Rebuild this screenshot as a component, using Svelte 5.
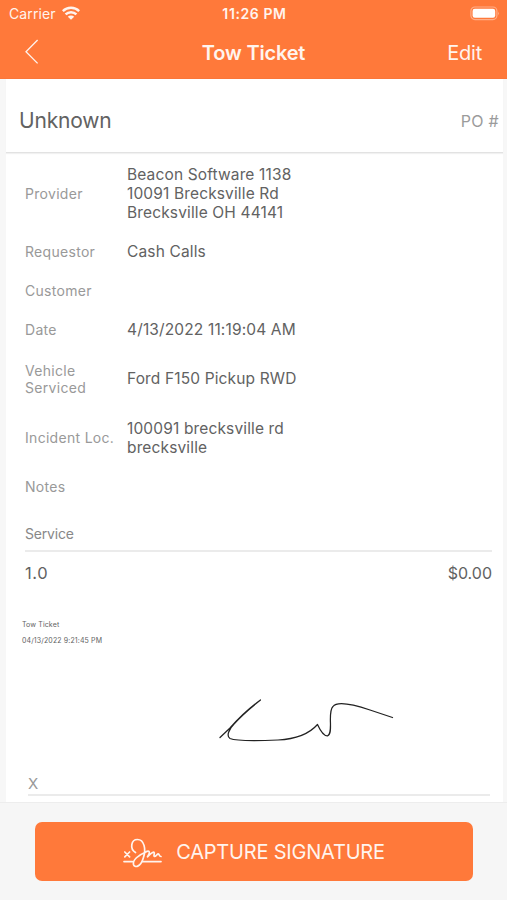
<script>
  const rows = [
    { label: 'Provider', lines: ['Beacon Software 1138', '10091 Brecksville Rd', 'Brecksville OH 44141'] },
    { label: 'Requestor', lines: ['Cash Calls'] },
    { label: 'Customer', lines: [] },
    { label: 'Date', lines: ['4/13/2022 11:19:04 AM'] },
    { label: 'Vehicle Serviced', lines: ['Ford F150 Pickup RWD'], tall: true },
    { label: 'Incident Loc.', lines: ['100091 brecksville rd', 'brecksville'], tall: true },
    { label: 'Notes', lines: [] }
  ];

  const services = [{ qty: '1.0', price: '$0.00' }];
</script>

<div class="screen">
  <header>
    <div class="status-bar">
      <div class="carrier">
        <span>Carrier</span>
        <svg class="wifi" viewBox="0 0 18 14">
          <g fill="none" stroke="currentColor" stroke-width="2.5">
            <path d="M0.8 5.1 A11.6 11.6 0 0 1 17.2 5.1" />
            <path d="M3.6 8.4 A7.6 7.6 0 0 1 14.4 8.4" />
          </g>
          <path d="M5.8 10.7 A4.6 4.6 0 0 1 12.2 10.7 L9 13.8 Z" fill="currentColor" />
        </svg>
      </div>
      <div class="clock">11:26 PM</div>
      <svg class="battery" viewBox="0 0 30 15">
        <rect x="0.9" y="1" width="26" height="12.6" rx="4" fill="none" stroke="#fff" stroke-opacity="0.4" stroke-width="1.2" />
        <rect x="2.6" y="2.8" width="22.6" height="9" rx="2.2" fill="#fff" />
        <path d="M28.2 5.4 Q29.7 7.3 28.2 9.2 Z" fill="#fff" fill-opacity="0.5" />
      </svg>
    </div>
    <nav>
      <button class="back" aria-label="Back">
        <svg viewBox="0 0 14 26">
          <path d="M12.6 1 L1 12.7 L12.6 24.4" fill="none" stroke="currentColor" stroke-width="1.3" />
        </svg>
      </button>
      <h1>Tow Ticket</h1>
      <button class="edit">Edit</button>
    </nav>
  </header>

  <main>
    <div class="summary">
      <span class="name">Unknown</span>
      <span class="po">PO #</span>
    </div>

    <div class="details">
      {#each rows as row}
        <div class="row" class:tall={row.tall}>
          <div class="label">{row.label}</div>
          <div class="value">
            {#each row.lines as line}
              <div>{line}</div>
            {/each}
          </div>
        </div>
      {/each}
    </div>

    <div class="services">
      <div class="services-title">Service</div>
      {#each services as service}
        <div class="service">
          <span class="qty">{service.qty}</span>
          <span>{service.price}</span>
        </div>
      {/each}
    </div>

    <div class="signature">
      <div class="stamp">
        <div>Tow Ticket</div>
        <div>04/13/2022 9:21:45 PM</div>
      </div>
      <svg class="ink" viewBox="0 0 180 50">
        <path
          d="M2 42.5 L12 33 Q26 17 42.5 5 Q26 18 16 29 C11 34 8 41 12 43.5 C18 46 44 45.7 60 45 C80 44 92 38 99.5 29.5 C102 35 106 41 109.5 40.8 C116 39 109 17 115 11.5 C119 6 137 10 152 15 L174.5 22.5"
          fill="none" stroke="#222" stroke-width="1.25" stroke-linecap="round" stroke-linejoin="round"
        />
      </svg>
      <div class="sign-line">X</div>
    </div>
  </main>

  <footer>
    <button class="capture">
      <svg class="pen" viewBox="0 0 40 30">
        <g fill="none" stroke="currentColor" stroke-width="1.7" stroke-linecap="round" stroke-linejoin="round">
          <path d="M1.8 14 L6.6 18.8 M6.6 14 L1.8 18.8" />
          <path d="M1 23.6 H9.5 M19 23.6 H38" />
          <path d="M12.5 14.5 C6.5 11 8 1.5 14.5 1.5 C21 1.5 23.5 11 20.3 20 C17.5 29.5 11.5 30 10.5 26.5 C9.5 22 15.5 17 22 14.5 C26 12 28 13 24.5 18.8 C27 16.5 29.5 13.8 31 14.2 C32.3 15 30 18 31.5 18.3 C33 18.5 34.3 15.5 35.5 16 C36.5 16.5 36 18.5 38 18.5" />
        </g>
      </svg>
      <span>CAPTURE SIGNATURE</span>
    </button>
  </footer>
</div>

<style>
  :global(body) {
    margin: 0;
    background: #f6f6f6;
  }

  .screen {
    height: 900px;
    display: flex;
    flex-direction: column;
    background: #f7f7f7;
    font-family: Inter, "Liberation Sans", sans-serif;
    color: #626262;
  }

  button {
    border: none;
    background: none;
    padding: 0;
    font: inherit;
    color: inherit;
  }

  header {
    flex: none;
    height: 79px;
    box-sizing: border-box;
    background: #ff793a;
    border-bottom: 1px solid #fa7639;
    color: #fff4ee;
  }

  .status-bar {
    height: 27px;
    padding: 0 7px 0 9px;
    display: grid;
    grid-template-columns: 1fr auto 1fr;
    align-items: center;
    font-size: 14px;
  }

  .carrier {
    display: flex;
    align-items: center;
    gap: 6px;
    letter-spacing: 0.1px;
  }

  .wifi {
    width: 18px;
    height: 14px;
    margin-bottom: 2px;
  }

  .clock {
    font-size: 14px;
    font-weight: 600;
    letter-spacing: 0.6px;
  }

  .battery {
    width: 30px;
    height: 15px;
    justify-self: end;
  }

  nav {
    height: 51px;
    padding: 0 25px;
    display: grid;
    grid-template-columns: 1fr auto 1fr;
    align-items: center;
  }

  .back {
    height: 26px;
    margin-bottom: 2px;
    justify-self: start;
  }

  .back svg {
    display: block;
    width: 14px;
    height: 26px;
  }

  h1 {
    margin: 0;
    font-size: 20px;
    font-weight: 600;
    letter-spacing: -0.2px;
  }

  .edit {
    justify-self: end;
    font-size: 20px;
    letter-spacing: -0.2px;
  }

  main {
    flex: 1;
    min-height: 0;
    margin: 0 4px 0 6px;
    background: #fff;
    display: flex;
    flex-direction: column;
  }

  .summary {
    height: 74px;
    padding: 10px 4px 0 13px;
    box-sizing: border-box;
    border-bottom: 1px solid #e2e2e2;
    box-shadow: 0 1px 1px #f1f1f1;
    display: flex;
    align-items: center;
    justify-content: space-between;
  }

  .name {
    font-size: 21px;
    letter-spacing: -0.2px;
  }

  .po {
    font-size: 16px;
    letter-spacing: 0.3px;
    color: #9b9b9b;
  }

  .details {
    padding: 2px 11px 0 19px;
  }

  .row {
    min-height: 39px;
    padding: 10px 0;
    box-sizing: border-box;
    display: grid;
    grid-template-columns: 92px 1fr;
    column-gap: 10px;
    align-items: center;
  }

  .row.tall {
    min-height: 59px;
  }

  .label {
    font-size: 14px;
    line-height: 17px;
    letter-spacing: 0.3px;
    color: #999;
  }

  .value {
    font-size: 15.5px;
    line-height: 19px;
    letter-spacing: 0.14px;
  }

  .services {
    padding: 0 11px 0 19px;
  }

  .services-title {
    height: 46px;
    padding-top: 10px;
    box-sizing: border-box;
    border-bottom: 2px solid #ebebeb;
    font-size: 14px;
    line-height: 35px;
    letter-spacing: -0.2px;
    color: #888;
  }

  .service {
    height: 42px;
    display: flex;
    align-items: center;
    justify-content: space-between;
    font-size: 16px;
  }

  .qty {
    font-size: 16.5px;
    letter-spacing: 0.6px;
  }

  .signature {
    flex: 1;
    padding: 23px 13px 6px 16px;
    display: flex;
    flex-direction: column;
  }

  .stamp {
    font-size: 7px;
    line-height: 16px;
    letter-spacing: 0.13px;
  }

  .ink {
    width: 180px;
    height: 50px;
    margin: 46px 0 0 196px;
  }

  .sign-line {
    margin: auto 0 0 6px;
    border-bottom: 2px solid #ebebeb;
    font-size: 15px;
    line-height: 20px;
    color: #999;
  }

  footer {
    flex: none;
    height: 98px;
    padding: 19px 34px 19px 35px;
    box-sizing: border-box;
    border-top: 1px solid #ededed;
    background: #f6f6f6;
  }

  .capture {
    width: 100%;
    height: 59px;
    border-radius: 7px;
    background: #ff793a;
    color: #fff4ee;
    font-size: 20px;
    letter-spacing: -0.2px;
    display: flex;
    align-items: center;
    justify-content: center;
    gap: 13px;
  }

  .pen {
    width: 40px;
    height: 30px;
    margin-top: 2px;
  }
</style>
